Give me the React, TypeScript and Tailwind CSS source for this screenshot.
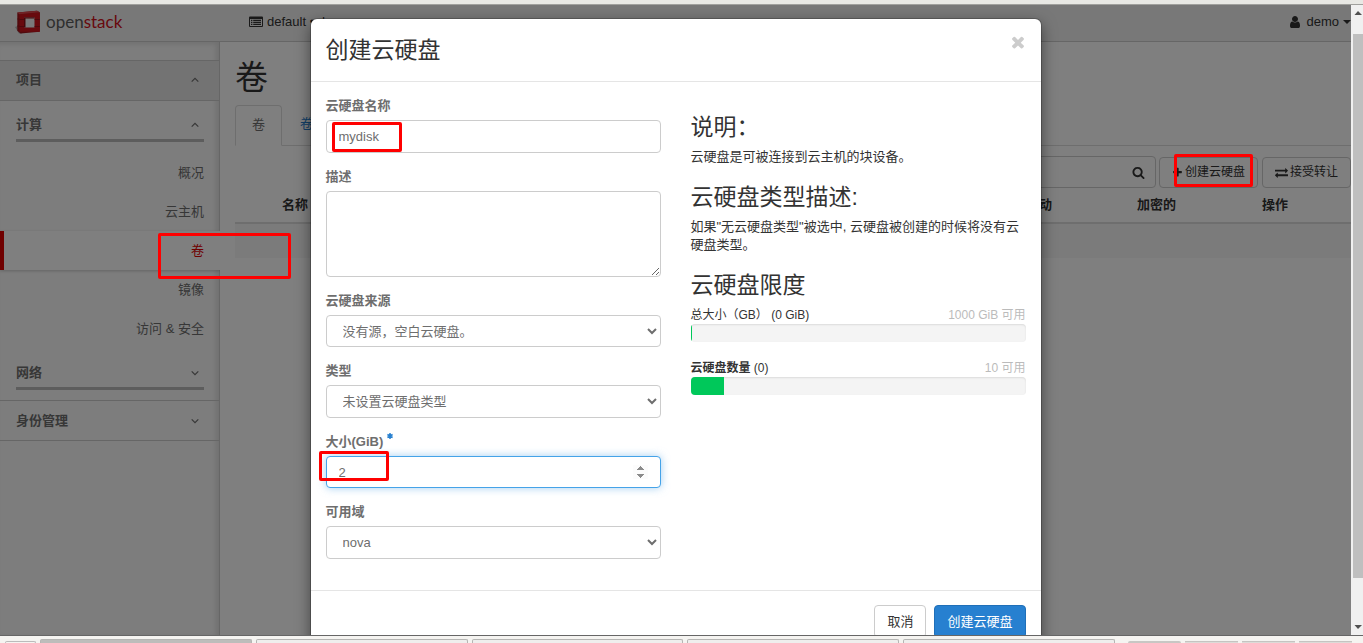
import { useState, type ReactNode } from 'react'

const icons = {
  times: 'M1490 1322q0 40-28 68l-136 136q-28 28-68 28t-68-28l-294-294-294 294q-28 28-68 28t-68-28l-136-136q-28-28-28-68t28-68l294-294-294-294q-28-28-28-68t28-68l136-136q28-28 68-28t68 28l294 294 294-294q28-28 68-28t68 28l136 136q28 28 28 68t-28 68l-294 294 294 294q28 28 28 68z',
  search: 'M1216 832q0-185-131.5-316.5t-316.5-131.5-316.5 131.5-131.5 316.5 131.5 316.5 316.5 131.5 316.5-131.5 131.5-316.5zm512 832q0 52-38 90t-90 38q-54 0-90-38l-343-342q-179 124-399 124-143 0-273.5-55.5t-225-150-150-225-55.5-273.5 55.5-273.5 150-225 225-150 273.5-55.5 273.5 55.5 225 150 150 225 55.5 273.5q0 220-124 399l343 343q37 37 37 90z',
  plus: 'M1600 736v192q0 40-28 68t-68 28h-416v416q0 40-28 68t-68 28h-192q-40 0-68-28t-28-68v-416h-416q-40 0-68-28t-28-68v-192q0-40 28-68t68-28h416v-416q0-40 28-68t68-28h192q40 0 68 28t28 68v416h416q40 0 68 28t28 68z',
  exchange: 'M1792 1184v192q0 13-9.5 22.5t-22.5 9.5h-1376v192q0 13-9.5 22.5t-22.5 9.5q-12 0-24-10l-319-320q-9-9-9-22 0-14 9-23l320-320q9-9 23-9 13 0 22.5 9.5t9.5 22.5v192h1376q13 0 22.5 9.5t9.5 22.5zm0-544q0 14-9 23l-320 320q-9 9-23 9-13 0-22.5-9.5t-9.5-22.5v-192h-1376q-13 0-22.5-9.5t-9.5-22.5v-192q0-13 9.5-22.5t22.5-9.5h1376v-192q0-14 9-23t23-9q12 0 24 10l319 319q9 9 9 23z',
  user: 'M1536 1399q0 109-62.5 187t-150.5 78h-854q-88 0-150.5-78t-62.5-187q0-85 8.5-160.5t31.5-152 58.5-131 94-89 134.5-34.5q131 128 313 128t313-128q76 0 134.5 34.5t94 89 58.5 131 31.5 152 8.5 160.5zm-256-887q0 159-112.5 271.5t-271.5 112.5-271.5-112.5-112.5-271.5 112.5-271.5 271.5-112.5 271.5 112.5 112.5 271.5z',
}

function Icon({ name, className }: { name: keyof typeof icons; className: string }) {
  return (
    <svg viewBox="0 0 1792 1792" className={className} fill="currentColor" aria-hidden="true">
      <path d={icons[name]} />
    </svg>
  )
}

function ListIcon() {
  return (
    <svg viewBox="0 0 14 12" className="w-[14px] h-3" fill="currentColor" aria-hidden="true">
      <path fillRule="evenodd" d="M1 .5h12a1 1 0 0 1 1 1v8.500a1 1 0 0 1-1 1H1a1 1 0 0 1-1-1v-8.500a1 1 0 0 1 1-1zM1 3v7h12V3z" />
      <path d="M2 3.800h1.400v1.300H2zM4.200 3.800h7.800v1.300H4.200zM2 5.800h1.400v1.300H2zM4.200 5.800h7.800v1.300H4.200zM2 7.800h1.400v1.300H2zM4.200 7.800h7.800v1.300H4.200z" />
    </svg>
  )
}

function Logo() {
  return (
    <a href="#" className="flex items-center gap-[5px]" aria-label="openstack">
      <svg viewBox="0 0 26 24" className="w-[26px] h-6" aria-hidden="true">
        <path d="M0 17l4 6.500h3l-3-8z" fill="#000" opacity=".25" />
        <path d="M2.300 2.500L22 .8l2.800 1.400v19.500L5.500 23.500l-3.200-2.800z" fill="#a3141c" />
        <path d="M4.400 4.200l20.400-1.700v19.200H4.400zM9 7.200v10.300h10.500V7.200z" fill="#d0141d" fillRule="evenodd" />
        <path d="M2.300 2.500L22 .8l2.800 1.400L4.400 4.200z" fill="#e2474c" />
        <path d="M9 7.200h10.500v10.300H9z" fill="#f5f5f5" />
        <path d="M9 7.200h10.500v1.300h-9v9H9z" fill="#8d1117" />
        <path d="M2.300 9h2.200M2.300 16h2.200M4.400 9.500h4.500M19.500 9.500h5.300M4.400 16.500h4.500M19.500 16.500h5.300" stroke="#8d1117" strokeWidth=".8" />
      </svg>
      <span className="font-['Lato',sans-serif] text-[17px] leading-6 text-[#5c5c5c]">
        open<span className="text-[#d0121b]">stack</span>
      </span>
    </a>
  )
}

function Chevron({ open }: { open?: boolean }) {
  return (
    <svg viewBox="0 0 8 6" className="w-2 h-[6px]" fill="none" stroke="currentColor" strokeWidth="1.2" aria-hidden="true">
      <path d={open ? 'M.7 4.700L4 1.400l3.300 3.300' : 'M.7 1.300L4 4.600l3.300-3.300'} />
    </svg>
  )
}

function PanelGroup({ title, open }: { title: string; open?: boolean }) {
  return (
    <button className="flex items-center justify-between w-[188px] mx-4 pt-[15px] pb-[5px] pr-[5px] border-b-3 border-[#bbb] font-bold">
      {title}
      <Chevron open={open} />
    </button>
  )
}

const panels = ['概况', '云主机', '卷', '镜像', '访问 & 安全']

function Sidebar() {
  return (
    <nav className="w-[220px] shrink-0 pt-[18px] bg-[#fafafa] border-r border-[#ccc] text-[#6e6e6e] shadow-[inset_-3px_2px_5px_#0000001a]">
      <button className="flex items-center justify-between w-full h-[41px] pl-4 pr-5 pb-[2px] bg-[#e7e7e7] border-y border-[#ccc] font-bold">
        项目
        <Chevron open />
      </button>
      <PanelGroup title="计算" open />
      <ul className="mt-[11px] mb-px">
        {panels.map(p => (
          <li key={p}>
            <a
              href="#"
              className={p === '卷'
                ? 'flex items-center justify-end h-[39px] -mr-px pr-4 bg-white border-l-4 border-l-[#e00000] text-[#e00000] shadow-[0_1px_3px_#00000033]'
                : 'flex items-center justify-end h-[39px] pr-[15px]'}
            >
              {p}
            </a>
          </li>
        ))}
      </ul>
      <PanelGroup title="网络" />
      <button className="flex items-center justify-between w-full h-[41px] mt-[10px] pl-4 pr-5 border-y border-[#ccc] font-bold">
        身份管理
        <Chevron />
      </button>
    </nav>
  )
}

const actionButton = 'flex items-center gap-[2px] h-[31px] px-3 border border-[#ccc] rounded text-xs whitespace-nowrap'

function Volumes() {
  return (
    <main className="flex-1 min-w-0 pl-[15px] bg-white">
      <h1 className="mt-[18px] text-[33px] leading-9">卷</h1>
      <div className="flex mt-[9px] border-b border-[#ddd]">
        <a href="#" className="-mb-px px-4 h-[41px] leading-[38px] border border-b-white border-[#ddd] rounded-t text-[#6e6e6e]">卷</a>
        <a href="#" className="px-[18px] leading-[38px] text-[#2780d0]">卷快照</a>
      </div>
      <div className="flex justify-end items-center mt-[10px]">
        <label className="flex items-center w-60 h-8 mr-[3px] pr-[10px] border border-[#ccc] rounded">
          <input aria-label="筛选" className="flex-1 min-w-0 px-3 outline-none" />
          <Icon name="search" className="size-[13px]" />
        </label>
        <button className={`${actionButton} mr-1`}>
          <Icon name="plus" className="size-[11px]" />创建云硬盘
        </button>
        <button className={actionButton}>
          <Icon name="exchange" className="size-[13px]" />接受转让
        </button>
      </div>
      <table className="w-full table-fixed text-left">
        <thead>
          <tr className="h-[35px] border-b-2 border-[#ddd]">
            <th className="w-[39px]" />
            <th className="px-2">名称</th>
            <th className="w-[124px] px-2">可启动</th>
            <th className="w-[125px] px-2">加密的</th>
            <th className="w-[97px] px-2">操作</th>
          </tr>
        </thead>
        <tbody>
          <tr className="h-[35px] bg-[#f6f6f6]">
            <td colSpan={5} />
          </tr>
        </tbody>
      </table>
    </main>
  )
}

function Mark({ className }: { className: string }) {
  return <div className={`absolute border-3 border-[#ff0000] rounded-xs pointer-events-none ${className}`} />
}

function Field({ id, label, required, children }: { id: string; label: string; required?: boolean; children: ReactNode }) {
  return (
    <div className="relative mb-[15px]">
      <label htmlFor={id} className="flex mb-[5px] font-bold leading-[18px] text-[#6e6e6e]">
        {label}
        {required && (
          <svg viewBox="0 0 6 6" className="size-[6px] ml-1" stroke="#2780d0" strokeWidth="1.500" aria-hidden="true">
            <path d="M3 0v6M.4 1.500l5.200 3M5.600 1.500l-5.200 3" />
          </svg>
        )}
      </label>
      {children}
    </div>
  )
}

const control = 'block w-full px-3 bg-white border rounded text-[#6e6e6e] outline-none'

function Quota({ label, bold, used, free, percent }: { label: string; bold?: boolean; used: string; free: string; percent: number }) {
  return (
    <div className="mb-[17px] text-xs leading-[18px]">
      <div className="flex justify-between">
        <span>{bold ? <b>{label}</b> : label} {used}</span>
        <span className="text-[#bbb]">{free}</span>
      </div>
      <div role="progressbar" aria-label={label} aria-valuenow={percent} className="h-[18px] rounded bg-[#f4f4f4] overflow-hidden shadow-[inset_0_1px_2px_#0000001a]">
        <div className="h-full min-w-px bg-[#00c85a]" style={{ width: `${percent}%` }} />
      </div>
    </div>
  )
}

function CreateVolume() {
  const [name, setName] = useState('mydisk')
  const [size, setSize] = useState('2')

  return (
    <div role="dialog" aria-labelledby="title" className="w-[730px] max-w-full mx-auto mt-[14px] bg-white rounded-md shadow-[0_0_0_1px_#00000033,0_5px_15px_#00000080]">
      <div className="flex items-start justify-between px-[15px] pt-[14px] pb-[14px] border-b border-[#e5e5e5]">
        <h3 id="title" className="text-[23px] leading-[34px]">创建云硬盘</h3>
        <button aria-label="关闭" className="-mr-px text-[#ccc]"><Icon name="times" className="size-[18px]" /></button>
      </div>
      <form className="grid grid-cols-2 gap-[30px] px-[15px] pt-[15px] pb-4">
        <div>
          <Field id="name" label="云硬盘名称">
            <input id="name" className={`${control} h-[33px] border-[#ccc]`} value={name} onChange={e => setName(e.target.value)} />
            <Mark className="left-[6px] top-[25px] w-[70px] h-[30px]" />
          </Field>
          <Field id="description" label="描述">
            <textarea id="description" className={`${control} h-[86px] py-[6px] border-[#ccc]`} />
          </Field>
          <Field id="source" label="云硬盘来源">
            <select id="source" className={`${control} h-8 border-[#ccc]`}><option>没有源，空白云硬盘。</option></select>
          </Field>
          <Field id="type" label="类型">
            <select id="type" className={`${control} h-[33px] border-[#ccc]`}><option>未设置云硬盘类型</option></select>
          </Field>
          <Field id="size" label="大小(GiB)" required>
            <input id="size" type="number" className={`${control} h-8 border-[#45a3e8] shadow-[0_0_8px_#66afe999] [&::-webkit-inner-spin-button]:opacity-100`} value={size} onChange={e => setSize(e.target.value)} />
            <Mark className="-left-[7px] top-[18px] w-[70px] h-[30px]" />
          </Field>
          <Field id="zone" label="可用域">
            <select id="zone" className={`${control} h-[33px] border-[#ccc]`}><option>nova</option></select>
          </Field>
        </div>
        <div className="pt-[18px]">
          <h3 className="mb-2 text-[23px] leading-[25px]">说明：</h3>
          <p className="mb-[19px] leading-[18px]">云硬盘是可被连接到云主机的块设备。</p>
          <h3 className="mb-2 text-[23px] leading-[25px]">云硬盘类型描述:</h3>
          <p className="mb-[19px] leading-[18px]">如果"无云硬盘类型"被选中, 云硬盘被创建的时候将没有云硬盘类型。</p>
          <h3 className="mb-2 text-[23px] leading-[25px]">云硬盘限度</h3>
          <Quota label="总大小（GB）" used="(0 GiB)" free="1000 GiB 可用" percent={0} />
          <Quota label="云硬盘数量" bold used="(0)" free="10 可用" percent={10} />
        </div>
      </form>
      <div className="flex justify-end gap-2 px-[15px] pt-[14px] pb-[15px] border-t border-[#e5e5e5]">
        <button className="h-[33px] px-3 border border-[#ccc] rounded">取消</button>
        <button className="h-[33px] px-3 border border-[#1f6fb8] rounded bg-[#2780d0] text-white">创建云硬盘</button>
      </div>
    </div>
  )
}

function Scrollbar() {
  return (
    <div className="flex flex-col items-end w-3 shrink-0 bg-[#f0f0f0]">
      <svg viewBox="0 0 10 29" className="w-[10px] h-[29px]" fill="#505050" aria-hidden="true"><path d="M1.500 10L5 6l4 4z" /></svg>
      <div className="w-[10px] flex-1 bg-[#bfbfbf]" />
      <svg viewBox="0 0 10 57" className="w-[10px] h-[57px]" fill="#505050" aria-hidden="true"><path d="M1.500 47h7.500L5 51z" /></svg>
    </div>
  )
}

// The desktop's task bar, of which only the upper edge shows
function TaskBar() {
  return (
    <div className="flex h-2 shrink-0 gap-1 pl-[5px] pt-[3px] pr-[11px] bg-[#f5f4f1] border-t border-[#666]">
      <div className="w-[31px] mt-[2px] border border-b-0 border-[#bbb] rounded-t-xs" />
      <div className="flex-1 bg-[#bdbdbb] border border-b-0 border-[#b5b5b3] rounded-t-xs" />
      {[1, 2, 3, 4].map(n => (
        <div key={n} className="flex-1 bg-[#efeeed] border border-b-0 border-[#b5b5b3] rounded-t-xs" />
      ))}
      <div className="w-[53px] mt-[2px] ml-[9px] bg-[#c8c7c4] rounded-t-xs" />
      {[1, 2, 3].map(n => (
        <div key={n} className="w-[53px] mt-[2px] bg-[#dcdbd8] border-t border-[#c5c4c1]" />
      ))}
    </div>
  )
}

export default function App() {
  return (
    <div className="flex flex-col h-screen overflow-hidden font-['Liberation_Sans','Noto_Sans_CJK_SC',sans-serif] text-[13px] leading-[18px] text-[#333]">
      <div className="h-[5px] shrink-0 bg-[#e8e8e4] border-b border-[#a0a09d]" />
      <div className="flex flex-1 min-h-0">
        <div className="relative flex flex-col flex-1 min-w-0 overflow-hidden">
          <header className="flex items-center h-[37px] shrink-0 pl-[15px] pb-[2px] bg-[#f0f0f0] border-b border-[#ccc]">
            <div className="w-[234px]"><Logo /></div>
            <button className="flex items-center gap-1"><ListIcon />default • demo</button>
            <button className="flex items-center gap-1 ml-auto">
              <Icon name="user" className="size-[14px]" />
              demo
              <svg viewBox="0 0 8 4" className="w-2 h-1" fill="currentColor" aria-hidden="true"><path d="M0 0h8L4 4z" /></svg>
            </button>
          </header>
          <div className="flex flex-1">
            <Sidebar />
            <Volumes />
          </div>
          <div className="absolute inset-0 bg-black/50">
            <CreateVolume />
          </div>
          <Mark className="left-[158px] top-[228px] w-[133px] h-[46px]" />
          <Mark className="right-[98px] top-[149px] w-[79px] h-[33px]" />
        </div>
        <Scrollbar />
      </div>
      <TaskBar />
    </div>
  )
}
